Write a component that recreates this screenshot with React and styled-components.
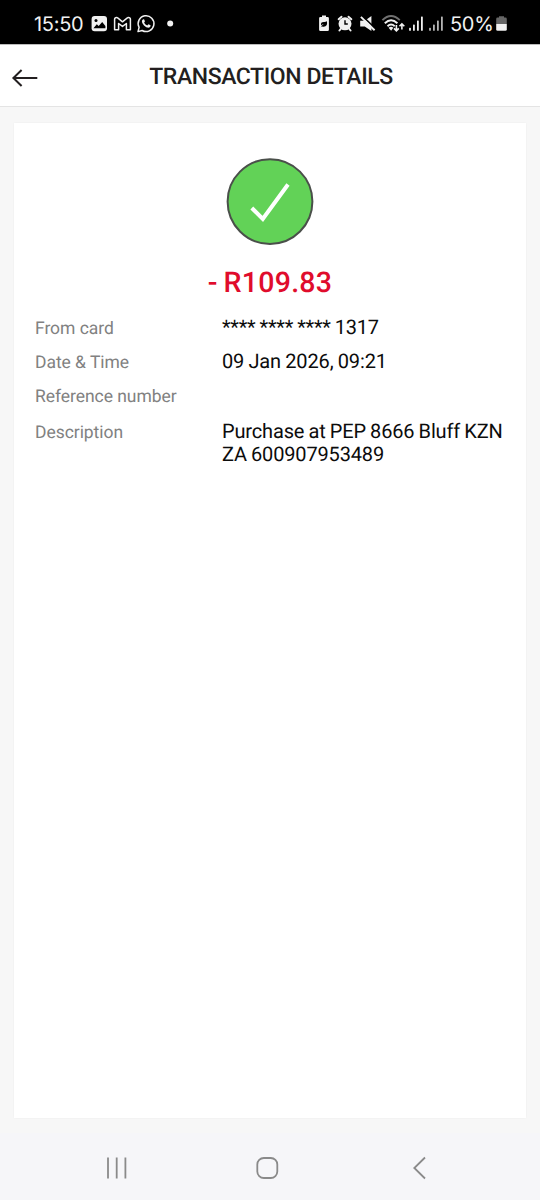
import React from "react";
import styled, { createGlobalStyle } from "styled-components";

const GlobalStyle = createGlobalStyle`
  * { box-sizing: border-box; }
  body { margin: 0; background: #f7f7f7; text-rendering: geometricPrecision; }
`;

const Screen = styled.div`
  width: 540px;
  height: 1200px;
  display: flex;
  flex-direction: column;
  background: #f7f7f7;
  font-family: Roboto, "Liberation Sans", sans-serif;
  overflow: hidden;
`;

const StatusBar = styled.div`
  flex: none;
  height: 45px;
  padding: 4px 33px 0 34px;
  display: flex;
  align-items: center;
  justify-content: space-between;
  background: #000;
  border-bottom: 1px solid #bcbcbc;
  color: #f1f1f1;
`;

const StatusGroup = styled.div`
  display: flex;
  align-items: center;
`;

const StatusText = styled.span`
  font-family: Inter, Roboto, sans-serif;
  font-size: 20px;
  line-height: 20px;
  width: ${(p) => p.$width}px;
  margin-left: ${(p) => p.$gap || 0}px;
  letter-spacing: -0.3px;
  white-space: nowrap;
`;

const StatusIcon = styled.svg`
  display: block;
  height: 20px;
  margin-left: ${(p) => p.$gap}px;
  overflow: visible;
`;

const Header = styled.header`
  flex: none;
  height: 62px;
  display: grid;
  grid-template-columns: 50px 1fr 50px;
  align-items: center;
  padding-top: 2px;
  background: #fff;
  border-bottom: 1px solid #e4e4e4;
`;

const BackButton = styled.button`
  border: 0;
  padding: 2px 0 0 11px;
  background: none;
  display: flex;
`;

const Title = styled.h1`
  margin: 0;
  padding-left: 2px;
  text-align: center;
  font-size: 23px;
  line-height: 28px;
  font-weight: 500;
  color: #231f20;
  white-space: nowrap;
  letter-spacing: -0.42px;
`;

const Content = styled.main`
  flex: 1;
  padding: 16px 14px 15px;
  display: flex;
`;

const Card = styled.section`
  flex: 1;
  background: #fff;
  box-shadow: 0 0 2px rgba(0, 0, 0, 0.05);
  padding: 34px 21px 0;
`;

const Result = styled.div`
  display: flex;
  flex-direction: column;
  align-items: center;
`;

const Amount = styled.div`
  margin-top: 19px;
  font-size: 28.5px;
  line-height: 34px;
  font-weight: 500;
  color: #e00c2c;
  letter-spacing: 0.3px;
  word-spacing: -1.6px;
`;

const Details = styled.dl`
  margin: 17px 0 0;
`;

const Row = styled.div`
  display: grid;
  grid-template-columns: 187px 1fr;
  min-height: ${(p) => p.$height || 34}px;
`;

const Label = styled.dt`
  font-size: 17.5px;
  line-height: 24px;
  color: #818181;
  letter-spacing: -0.05px;
`;

const Value = styled.dd`
  margin: -1px -20px 0 0;
  font-size: 20px;
  line-height: 23px;
  color: #0c0c0c;
  white-space: pre-line;
  letter-spacing: ${(p) => p.$spacing || 0}px;
  word-spacing: -0.6px;
`;

const NavBar = styled.nav`
  flex: none;
  height: 67px;
  display: flex;
  align-items: center;
  padding: 2px 110px 0 105px;
  justify-content: space-between;
  background: #f6f6f9;
`;

const NavIcon = styled.svg`
  display: block;
  width: 24px;
  height: 24px;
  fill: none;
  stroke: #8a8a8a;
  stroke-width: 1.8;
`;

function ImageIcon() {
  return (
    <StatusIcon $gap={0} width="16" viewBox="0 0 16 20">
      <rect x="-0.4" y="2" width="15.4" height="15.2" rx="3" fill="#f1f1f1" />
      <circle cx="4" cy="6.4" r="1.5" fill="#000" />
      <path d="M1.4 14.2 L4.8 10.2 L6.7 12.1 L10.2 8 L13.4 12 V14.2 Z" fill="#000" />
    </StatusIcon>
  );
}

function MailIcon() {
  return (
    <StatusIcon $gap={6} width="17" viewBox="0 0 17 20">
      <path
        d="M0.6 5.2 Q0.6 3.4 2.6 3.4 L4 4.2 L8.5 7.8 L13 4.2 L14.4 3.4 Q16.4 3.4 16.4 5.2 V15.8 H12.4 V9.5 L8.5 12.4 L4.6 9.5 V15.8 H0.6 Z"
        fill="none"
        stroke="#f1f1f1"
        strokeWidth="1.5"
        strokeLinejoin="round"
      />
    </StatusIcon>
  );
}

function ChatIcon() {
  return (
    <StatusIcon $gap={6} width="18" viewBox="0 0 18 20">
      <path
        d="M1 17.6 L2.1 13.4 A7.9 7.9 0 1 1 5.1 16.5 Z"
        fill="none"
        stroke="#f1f1f1"
        strokeWidth="1.5"
        strokeLinejoin="round"
      />
      <path
        d="M6.3 5.2 Q6.9 5 7.2 5.6 L7.9 7.3 Q8 7.8 7.1 8.7 Q8.3 10.8 10.3 11.5 L11.4 10.3 L13.6 11.3 Q13.8 13.4 11.5 13.7 Q9.3 13.7 7 11.5 Q4.7 9.2 4.9 7.3 Q5 5.6 6.3 5.2 Z"
        fill="#f1f1f1"
      />
    </StatusIcon>
  );
}

function DotIcon() {
  return (
    <StatusIcon $gap={12} width="6" viewBox="0 0 6 20">
      <circle cx="3.2" cy="9.4" r="3" fill="#f1f1f1" />
    </StatusIcon>
  );
}

function SaverIcon() {
  return (
    <StatusIcon $gap={0} width="10" viewBox="0 0 10 20">
      <path d="M3 1.6 H7 V3 H8.6 Q9.9 3 9.9 4.3 V15.7 Q9.9 17 8.6 17 H1.4 Q0.1 17 0.1 15.7 V4.3 Q0.1 3 1.4 3 H3 Z" fill="#f1f1f1" />
      <path d="M8 7.2 Q8.7 12.6 4.8 12.7 Q3.8 12.8 2.9 12.2 L1.7 13.4 Q2 11.8 4.8 9.9 Q3.1 10.3 2.1 11.3 Q1.3 7.8 5 7.9 Q6.6 8 8 7.2 Z" fill="#000" />
    </StatusIcon>
  );
}

function AlarmIcon() {
  return (
    <StatusIcon $gap={9} width="14" viewBox="0 0 14 20">
      <circle cx="7" cy="9.8" r="6.5" fill="#f1f1f1" />
      <path d="M0.6 5.2 L3.5 2.7 M13.4 5.2 L10.5 2.7 M2.8 14.8 L1.4 16.5 M11.2 14.8 L12.6 16.5" stroke="#f1f1f1" strokeWidth="1.9" strokeLinecap="round" />
      <path d="M7 6.3 V10 H9.8" fill="none" stroke="#000" strokeWidth="1.4" />
    </StatusIcon>
  );
}

function MuteIcon() {
  return (
    <StatusIcon $gap={8} width="15" viewBox="0 0 15 20">
      <path d="M0.2 6.8 H4.8 L11.4 2 V17 L4.8 12.5 H0.2 Z" fill="#f1f1f1" />
      <path d="M1.9 1.6 L15.8 14.9" stroke="#000" strokeWidth="1.6" />
      <path d="M0.9 2.9 L14.6 16.3" stroke="#f1f1f1" strokeWidth="1.9" />
    </StatusIcon>
  );
}

function WifiIcon() {
  return (
    <StatusIcon $gap={7} width="23" viewBox="0 0 23 20">
      <g fill="none" strokeWidth="1.9">
        <path d="M0.4 6.1 Q9 -2.1 17.8 6.1" stroke="#707070" />
        <path d="M2.8 9.2 Q9.1 3.3 15.4 9.2" stroke="#f1f1f1" />
        <path d="M5.5 12.2 Q9.1 9 12.7 12.2" stroke="#f1f1f1" />
      </g>
      <path d="M6.6 13.8 Q9.1 11.9 11.4 13.8 L9.1 16.8 Z" fill="#f1f1f1" />
      <path d="M14.4 11 V16.6 M12 14.4 L14.4 16.8 L16.8 14.4 M19.9 15.4 V10 M17.5 12.2 L19.9 9.8 L22.3 12.2" fill="none" stroke="#f1f1f1" strokeWidth="1.6" />
    </StatusIcon>
  );
}

function SignalIcon({ gap, level }) {
  const bars = [
    [0.1, 13.8],
    [4, 10.6],
    [8, 6.4],
    [12, 2.4],
  ];
  return (
    <StatusIcon $gap={gap} width="14" viewBox="0 0 14 20">
      {bars.map(([x, y]) => (
        <rect key={x} x={x} y={y} width="1.8" height={16.8 - y} rx="0.6" fill={level} />
      ))}
    </StatusIcon>
  );
}

function BatteryIcon() {
  return (
    <StatusIcon $gap={3} width="11" viewBox="0 0 11 20">
      <path d="M3 2.2 H8 V3.6 H9.4 Q10.8 3.6 10.8 5 V10 H0.2 V5 Q0.2 3.6 1.6 3.6 H3 Z" fill="#666" />
      <path d="M0.2 10 H10.8 V15.4 Q10.8 16.8 9.4 16.8 H1.6 Q0.2 16.8 0.2 15.4 Z" fill="#f1f1f1" />
    </StatusIcon>
  );
}

const details = [
  { label: "From card", value: "**** **** **** 1317", spacing: -0.24 },
  { label: "Date & Time", value: "09 Jan 2026, 09:21", spacing: -0.13 },
  { label: "Reference number", value: "", height: 36 },
  { label: "Description", value: "Purchase at PEP 8666 Bluff KZN\nZA 600907953489", spacing: -0.16 },
];

export default function App() {
  return (
    <Screen>
      <GlobalStyle />
      <StatusBar>
        <StatusGroup>
          <StatusText $width={58}>15:50</StatusText>
          <ImageIcon />
          <MailIcon />
          <ChatIcon />
          <DotIcon />
        </StatusGroup>
        <StatusGroup>
          <SaverIcon />
          <AlarmIcon />
          <MuteIcon />
          <WifiIcon />
          <SignalIcon gap={4} level="#f1f1f1" />
          <SignalIcon gap={6} level="#b5b5b5" />
          <StatusText $width={43} $gap={7}>50%</StatusText>
          <BatteryIcon />
        </StatusGroup>
      </StatusBar>
      <Header>
        <BackButton aria-label="Back">
          <svg width="28" height="20" viewBox="0 0 28 20" fill="none" stroke="#231f20" strokeWidth="2">
            <path d="M26.3 10 H2.5 M10.6 2 L2.4 10 L10.6 18" />
          </svg>
        </BackButton>
        <Title>TRANSACTION DETAILS</Title>
      </Header>
      <Content>
        <Card>
          <Result>
            <svg width="90" height="90" viewBox="0 0 90 90">
              <circle cx="45" cy="44.6" r="42.4" fill="#62d257" stroke="#4a4f4a" strokeWidth="2" />
              <path d="M26.8 51 L37.8 62 L63 27.5" fill="none" stroke="#fff" strokeWidth="4" />
            </svg>
            <Amount>- R109.83</Amount>
          </Result>
          <Details>
            {details.map((d) => (
              <Row key={d.label} $height={d.height}>
                <Label>{d.label}</Label>
                <Value $spacing={d.spacing}>{d.value}</Value>
              </Row>
            ))}
          </Details>
        </Card>
      </Content>
      <NavBar>
        <NavIcon viewBox="0 0 24 24">
          <path d="M3 1.5 V22.5 M11.7 1.5 V22.5 M20.4 1.5 V22.5" />
        </NavIcon>
        <NavIcon viewBox="0 0 24 24">
          <rect x="1.3" y="2" width="20" height="20" rx="6.5" />
        </NavIcon>
        <NavIcon viewBox="0 0 24 24">
          <path d="M19 1.5 L8.3 12 L19 22.5" />
        </NavIcon>
      </NavBar>
    </Screen>
  );
}
